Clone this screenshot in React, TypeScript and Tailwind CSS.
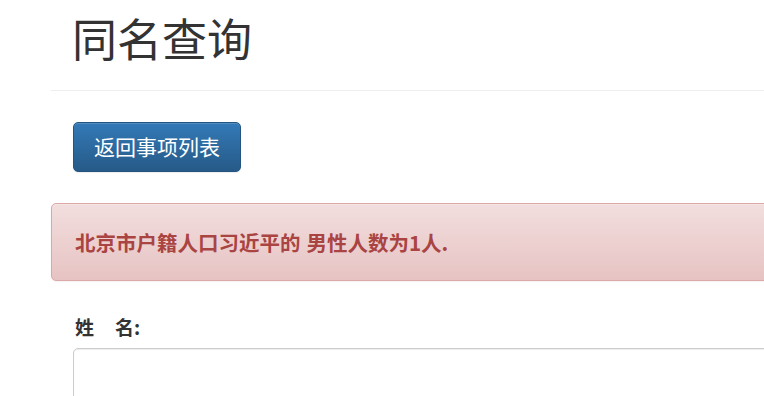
export default function App() {
  return (
    <div
      className="h-[396px] w-full overflow-hidden bg-white text-[#333]"
      style={{ fontFamily: '"Noto Sans CJK SC", "Noto Sans", sans-serif' }}
    >
      <div className="w-[900px] pl-[51px]">
        <div className="border-b border-[#eee] pb-[22px] pt-[8px]">
          <h1 className="pl-[21px] text-[45px] font-normal leading-[60px] text-[#333]">
            同名查询
          </h1>
        </div>

        <div className="pl-[22px] pt-[31px]">
          <button
            type="button"
            className="h-[50px] w-[168px] rounded-[5px] border border-[#245580] bg-gradient-to-b from-[#337ab7] to-[#265a88] text-[21px] text-white shadow-[inset_0_1px_0_rgba(255,255,255,0.15),0_1px_1px_rgba(0,0,0,0.075)]"
          >
            返回事项列表
          </button>
        </div>

        <div className="mt-[31px] flex h-[78px] items-center rounded-[5px] border border-[#dca7a7] bg-gradient-to-b from-[#f2dede] to-[#e7c3c3] pl-[23px] shadow-[inset_0_1px_0_rgba(255,255,255,0.25),0_1px_2px_rgba(0,0,0,0.05)]">
          <p className="text-[20.5px] font-bold text-[#a94442]">
            北京市户籍人口习近平的<span className="inline-block w-[6px]" />男性人数为1人.
          </p>
        </div>

        <div className="pl-[22px] pt-[33px]">
          <label className="flex text-[19px] font-bold leading-[26px] text-[#333]">
            <span className="pl-[2px]">姓</span>
            <span className="w-[21px]" />
            <span>名:</span>
          </label>
          <div className="mt-[8px] h-[60px] rounded-[5px] border border-[#ccc] bg-white shadow-[inset_0_1px_1px_rgba(0,0,0,0.075)]" />
        </div>
      </div>
    </div>
  );
}
